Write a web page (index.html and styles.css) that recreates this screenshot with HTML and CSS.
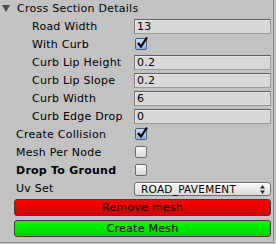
FILE: index.html
```html
<!DOCTYPE html>
<html lang="en">
<head>
    <meta charset="UTF-8">
    <meta name="viewport" content="width=device-width, initial-scale=1.0">
    <title>Cross Section Details</title>
    <link rel="stylesheet" href="styles.css">
</head>
<body>
    <div class="inspector">
        <!-- foldout header -->
        <div class="foldout">
            <svg class="arrow" width="8" height="7" viewBox="0 0 8 7"><polygon points="0,0 8,0 4,7" fill="#4a4a4a"/></svg>
            <span>Cross Section Details</span>
        </div>

        <!-- curb settings -->
        <div class="row sub">
            <label>Road Width</label>
            <div class="field">13</div>
        </div>
        <div class="row sub">
            <label>With Curb</label>
            <span class="toggle on">
                <svg width="14" height="14" viewBox="0 0 14 14"><path d="M3 7 L6 10.5 L12 1.5" fill="none" stroke="#000" stroke-width="2.2"/></svg>
            </span>
        </div>
        <div class="row sub">
            <label>Curb Lip Height</label>
            <div class="field">0.2</div>
        </div>
        <div class="row sub">
            <label>Curb Lip Slope</label>
            <div class="field">0.2</div>
        </div>
        <div class="row sub">
            <label>Curb Width</label>
            <div class="field">6</div>
        </div>
        <div class="row sub">
            <label>Curb Edge Drop</label>
            <div class="field">0</div>
        </div>

        <!-- mesh options -->
        <div class="row">
            <label>Create Collision</label>
            <span class="toggle on">
                <svg width="14" height="14" viewBox="0 0 14 14"><path d="M3 7 L6 10.5 L12 1.5" fill="none" stroke="#000" stroke-width="2.2"/></svg>
            </span>
        </div>
        <div class="row">
            <label>Mesh Per Node</label>
            <span class="toggle"></span>
        </div>
        <div class="row">
            <label class="bold">Drop To Ground</label>
            <span class="toggle"></span>
        </div>
        <div class="row">
            <label>Uv Set</label>
            <div class="popup">
                <span>ROAD_PAVEMENT</span>
                <svg width="5" height="9" viewBox="0 0 5 9"><polygon points="0,3.5 5,3.5 2.5,0" fill="#222"/><polygon points="0,5.5 5,5.5 2.5,9" fill="#222"/></svg>
            </div>
        </div>

        <div class="buttons">
            <button class="btn red">Remove mesh</button>
            <button class="btn green">Create Mesh</button>
        </div>
    </div>
</body>
</html>
```

FILE: styles.css
```css
*{
    padding: 0;
    margin: 0;
    box-sizing: border-box;
}
html, body{
    width: 100%;
    height: 100%;
    background: #c2c2c2;
}
body{
    font-family: "DejaVu Sans", sans-serif;
    font-size: 11px;
    letter-spacing: 0.25px;
    color: #000;
}

.inspector{
    width: 274px;
    height: 243px;
    border-right: 1px solid #8e8e8e;
    border-bottom: 1px solid #8e8e8e;
    padding-right: 2px;
}
.foldout{
    height: 17px;
    display: flex;
    align-items: center;
    padding-left: 2px;
}
.foldout .arrow{
    margin-right: 7px;
    margin-top: -1px;
}

.row{
    height: 18px;
    display: flex;
    align-items: center;
}
.row label{
    flex: 0 0 134px;
    padding-left: 16px;
    white-space: nowrap;
}
.row.sub label{
    padding-left: 32px;
}
.row label.bold{
    font-weight: bold;
}

.field{
    flex: 1;
    height: 15px;
    line-height: 13px;
    padding-left: 2px;
    background: #d8d8d8;
    border: 1px solid #9a9a9a;
    border-top-color: #5f5f5f;
    border-left-color: #7a7a7a;
    box-shadow: inset 1px 1px 0 #e6e6e6;
}

.toggle{
    width: 12px;
    height: 12px;
    margin-left: 1px;
    border: 1px solid #6b6b6b;
    border-radius: 2px;
    background: linear-gradient(#fafafa, #d6d6d6);
    position: relative;
}
.toggle.on{
    background: linear-gradient(#c9daf2, #8fb0df);
    border-color: #4d5d74;
}
.toggle svg{
    position: absolute;
    left: -1px;
    top: -3px;
}

.popup{
    flex: 1;
    height: 14px;
    margin-top: 2px;
    display: flex;
    align-items: center;
    justify-content: space-between;
    padding: 0 5px 0 6px;
    border: 1px solid #6f6f6f;
    border-radius: 3px;
    background: linear-gradient(#fdfdfd, #d9d9d9);
    font-size: 10.5px;
}

.buttons{
    padding: 2px 0 0 14px;
    display: flex;
    flex-direction: column;
    gap: 4px;
}
.btn{
    height: 17px;
    border: 1px solid #3d3d3d;
    border-radius: 3px;
    font-family: "DejaVu Sans", sans-serif;
    font-size: 11px;
    letter-spacing: 0.25px;
    color: #000;
}
.btn.red{
    background: linear-gradient(#ff0000, #cf0000);
}
.btn.green{
    background: linear-gradient(#00ff00, #00d000);
}
```
